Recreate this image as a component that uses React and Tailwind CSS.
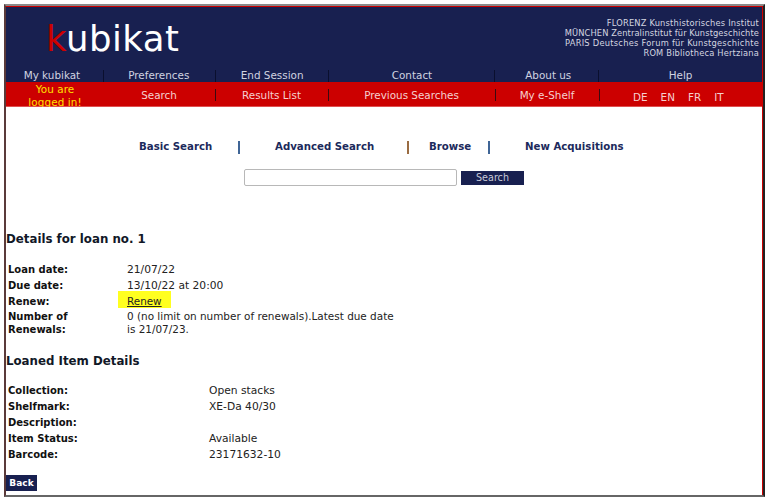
const font = { fontFamily: '"DejaVu Sans", Verdana, sans-serif' };

function Cell({ w, sep = true, children, className = "" }) {
  return (
    <div className={`relative flex items-center justify-center text-center ${className}`} style={{ width: w }}>
      {children}
      {sep && <span className="absolute right-0 top-[1px] w-[1px] h-[12px] bg-[#0a0f2e]" />}
    </div>
  );
}

const loan = [["Loan date:", "21/07/22"], ["Due date:", "13/10/22 at 20:00"]];
const item = [["Collection:", "Open stacks"], ["Shelfmark:", "XE-Da 40/30"], ["Description:", ""], ["Item Status:", "Available"], ["Barcode:", "23171632-10"]];

export default function App() {
  return (
    <div className="w-[768px] h-[502px] bg-white pt-[4px] pl-[4px] pr-[3px] pb-[5px] overflow-hidden" style={font}>
      <div className="h-full border-t-2 border-l-2 border-b-2 border-r-2 border-t-[#8a8a8a] border-l-[#5a3a3a] border-b-[#666666] border-r-[#222222] flex flex-col">
        <div className="flex-1 flex flex-col border-t border-r border-[#cc0000] min-h-0">
          <header className="h-[75px] bg-[#182050] flex flex-col shrink-0">
            <div className="h-[62px] flex justify-between">
              <div className="pl-[40px] pt-[10px] text-[35.5px] leading-[44px] text-white tracking-[0.5px]">
                <span className="text-[#cc0000]">k</span>ubikat
              </div>
              <div className="pt-[11px] pr-[3px] text-right text-[8.3px] leading-[10px] text-[#d4d6e0]">
                <div className="tracking-[0.19px]">FLORENZ Kunsthistorisches Institut</div>
                <div className="tracking-[0.1px]">MÜNCHEN Zentralinstitut für Kunstgeschichte</div>
                <div className="tracking-[0.25px]">PARIS Deutsches Forum für Kunstgeschichte</div>
                <div className="tracking-[0.18px]">ROM Bibliotheca Hertziana</div>
              </div>
            </div>
            <nav className="h-[13px] flex text-[10.4px] leading-[13px] text-[#d0d3e0]">
              <Cell w={98} className="pr-[6px]">My kubikat</Cell>
              <Cell w={112} className="pr-[2px]">Preferences</Cell>
              <Cell w={113}>End Session</Cell>
              <Cell w={167}>Contact</Cell>
              <Cell w={104} className="pl-[2px]">About us</Cell>
              <Cell w={163} sep={false}>Help</Cell>
            </nav>
          </header>
          <div className="h-[25px] pt-[4px] bg-[#cc0000] flex items-center text-[10.4px] text-[#f5d0d0] shrink-0 border-b border-b-[#e05050]">
            <div className="w-[98px] -mt-[1px] text-center text-[#ffe000] leading-[13px] tracking-[0.1px]">You are<br />logged in!</div>
            <RedCell w={112}>Search</RedCell>
            <RedCell w={113}>Results List</RedCell>
            <RedCell w={167}>Previous Searches</RedCell>
            <RedCell w={104}>My e-Shelf</RedCell>
            <div className="flex-1 flex gap-[13px] pl-[33px] pt-[3px] text-[10.4px]">
              <span>DE</span><span>EN</span><span>FR</span><span>IT</span>
            </div>
          </div>
          <main className="flex-1 bg-white relative min-h-0">
            <div className="h-[32px] mt-[24px] flex items-center text-[10.2px] font-bold text-[#1c2a5c] leading-[14px]">
              <span className="ml-[133px] w-[99px]">Basic Search</span>
              <span className="w-[2px] h-[13px] bg-[#3f6596]" />
              <span className="ml-[35px] w-[132px]">Advanced Search</span>
              <span className="w-[2px] h-[13px] bg-[#9a6c42]" />
              <span className="ml-[20px] w-[59px]">Browse</span>
              <span className="w-[2px] h-[13px] bg-[#3f6596]" />
              <span className="ml-[35px]">New Acquisitions</span>
            </div>
            <div className="flex items-center ml-[238px] mt-[6px]">
              <div className="w-[213px] h-[17px] bg-white border border-[#b8b8b8] rounded-[2px]" />
              <button className="ml-[4px] w-[63px] h-[14px] bg-[#182050] text-[#c8cad8] text-[9.6px] leading-[14px]">Search</button>
            </div>
            <h2 className="mt-[45px] ml-0 text-[11.8px] font-bold text-[#111827] leading-[16px]">Details for loan no. 1</h2>
            <div className="mt-[16px] ml-[2px] w-[400px] text-[10.7px] leading-[13px] text-[#222222]">
              {loan.map(([a, b]) => (
                <div key={a} className="flex h-[16px]">
                  <b className="w-[119px] text-[10px] text-[#111111]">{a}</b><span>{b}</span>
                </div>
              ))}
              <div className="flex h-[15px]">
                <b className="w-[119px] text-[10px] text-[#111111]">Renew:</b>
                <span className="relative">
                  <span className="absolute left-[-9px] top-[-4px] w-[53px] h-[17px] bg-[#ffff20]" />
                  <span className="relative underline text-[#222222] text-[10.4px]">Renew</span>
                </span>
              </div>
              <div className="flex">
                <b className="w-[119px] text-[10px] text-[#111111] pr-[20px]">Number of Renewals:</b>
                <span className="w-[275px] text-[10.45px]">0 (no limit on number of renewals).Latest due date is 21/07/23.</span>
              </div>
            </div>
            <h2 className="mt-[17px] text-[11.8px] font-bold text-[#111827] leading-[16px]">Loaned Item Details</h2>
            <div className="mt-[15px] ml-[2px] text-[10.7px] leading-[13px] text-[#222222]">
              {item.map(([a, b]) => (
                <div key={a} className="flex h-[16px]">
                  <b className="w-[201px] text-[10px] text-[#111111]">{a}</b><span>{b}</span>
                </div>
              ))}
            </div>
            <button className="block mt-[11px] w-[31px] h-[16px] bg-[#182050] text-white text-[9px] font-bold leading-[16px]">Back</button>
          </main>
        </div>
      </div>
    </div>
  );
}

function RedCell({ w, children }) {
  return (
    <div className="relative text-center pr-[2px]" style={{ width: w }}>
      {children}
      <span className="absolute right-0 top-[1px] w-[1px] h-[12px] bg-[#3a0a10]" />
    </div>
  );
}
